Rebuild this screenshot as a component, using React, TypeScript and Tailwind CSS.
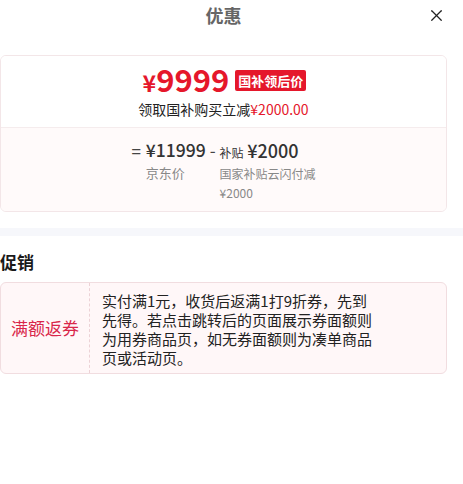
import { X } from "lucide-react";

const cjk = { fontFamily: '"Noto Sans CJK SC", "Noto Sans", sans-serif' };

const App = () => {
  return (
    <main className="w-[463px] h-[484px] bg-white overflow-hidden" style={cjk}>
      <div className="w-[447px]">
        {/* header */}
        <div className="grid grid-cols-[1fr_auto_1fr] items-center h-[30px]">
          <div />
          <p className="text-[18px] font-bold text-[#666] leading-none">优惠</p>
          <div className="flex justify-end pr-[1px]">
            <X size={19} strokeWidth={1.6} className="text-[#222]" />
          </div>
        </div>

        {/* price card */}
        <div className="mt-[25px] border border-[#f3e6e8] rounded-[6px] overflow-hidden">
          <div className="h-[71px] flex flex-col items-center pt-[9px] bg-white">
            <div className="flex items-center gap-[6px] pl-[2px] h-[30px]">
              <span className="text-[#e5172b] font-bold leading-[30px] flex items-baseline">
                <span className="text-[23px]">¥</span>
                <span className="text-[31px]">9999</span>
              </span>
              <span className="bg-[#e5172b] text-white text-[13px] font-bold leading-none px-[3px] py-[4px] rounded-[2px]">
                国补领后价
              </span>
            </div>
            <p className="text-[14px] text-[#222] leading-none mt-[7px]">
              领取国补购买立减<span className="text-[#e5172b]">¥2000.00</span>
            </p>
          </div>
          <div className="h-[84px] border-t border-[#f5eced] bg-[#fffafa] flex justify-center pt-[13px] pl-[2px]">
            <div className="flex">
              <span className="text-[17px] text-[#444] leading-none mt-[1px] mr-[5px]">=</span>
              <div className="flex flex-col">
                <span className="text-[17.5px] font-medium text-[#333] leading-none">¥11999</span>
                <span className="text-[13px] text-[#888] mt-[7px] leading-none">京东价</span>
              </div>
              <span className="text-[17px] text-[#444] leading-none mx-[4px]">-</span>
              <div className="flex flex-col">
                <span className="leading-none text-[#333]">
                  <span className="text-[12px]">补贴</span>{" "}
                  <span className="text-[18px] font-medium">¥2000</span>
                </span>
                <span className="text-[12px] text-[#888] mt-[5px] leading-[19px] w-[98px]">
                  国家补贴云闪付减 ¥2000
                </span>
              </div>
            </div>
          </div>
        </div>
      </div>

      {/* divider band */}
      <div className="h-[8px] bg-[#f6f7fb] mt-[16px]" />

      <div className="w-[447px]">
        <p className="text-[17px] font-bold text-[#1a1a1a] mt-[17px] leading-none">促销</p>

        <div className="mt-[12px] flex border border-[#f1dde0] rounded-[6px] bg-[#fff7f8] h-[92px]">
          <div className="w-[89px] flex items-center justify-center border-r border-dashed border-[#ecd2d6]">
            <span className="text-[17px] text-[#d9264a]">满额返券</span>
          </div>
          <div className="pl-[12px] pt-[8px]">
            <p className="w-[276px] text-[15px] text-[#222] leading-[19px]">
              实付满1元，收货后返满1打9折券，先到先得。若点击跳转后的页面展示券面额则为用券商品页，如无券面额则为凑单商品页或活动页。
            </p>
          </div>
        </div>
      </div>
    </main>
  );
};

export default App;
